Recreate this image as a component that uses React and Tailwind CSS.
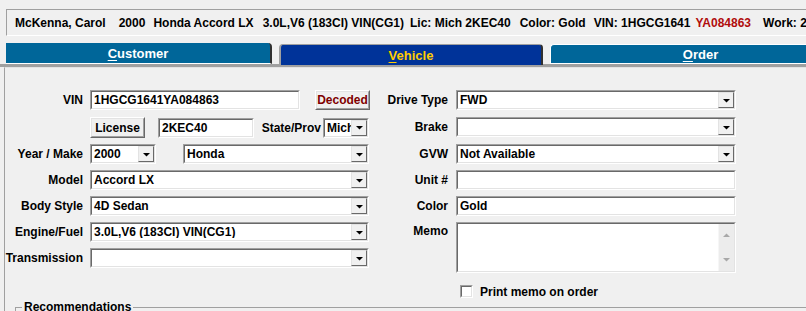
import React from 'react';

function Box({ className = '', inner = '', children }) {
  return (
    <div className={`shrink-0 border border-t-[#a0a0a0] border-l-[#a0a0a0] border-b-white border-r-white ${className}`}>
      <div className={`h-full flex border border-t-[#696969] border-l-[#696969] border-b-[#e3e3e3] border-r-[#e3e3e3] bg-white ${inner}`}>
        {children}
      </div>
    </div>
  );
}

function Arrow() {
  return (
    <div className="w-[16px] self-stretch bg-[#f0f0f0] border border-t-[#e3e3e3] border-l-[#e3e3e3] border-b-[#696969] border-r-[#696969] flex items-center justify-center">
      <svg width="7" height="4" viewBox="0 0 7 4" className="mt-[1px]">
        <path d="M0 0h7L3.5 3.6z" fill="#000" />
      </svg>
    </div>
  );
}

function Input({ value, className }) {
  return (
    <Box className={className} inner="items-center">
      <span className="pl-[2px] whitespace-nowrap">{value}</span>
    </Box>
  );
}

function Drop({ value, className }) {
  return (
    <Box className={className} inner="items-center">
      <span className="flex-1 min-w-0 overflow-hidden whitespace-nowrap pl-[2px]">{value}</span>
      <Arrow />
    </Box>
  );
}

function Btn({ children, className = '' }) {
  return (
    <div className={`shrink-0 border border-t-white border-l-white border-b-[#696969] border-r-[#696969] bg-[#f0f0f0] ${className}`}>
      <div className="h-full flex items-center justify-center border border-t-[#e3e3e3] border-l-[#e3e3e3] border-b-[#a0a0a0] border-r-[#a0a0a0]">
        {children}
      </div>
    </div>
  );
}

function LeftRow({ label, children, className = '' }) {
  return (
    <div className={`flex items-center h-[20px] ${className}`}>
      <div className="w-[78px] shrink-0 text-right whitespace-nowrap">{label}</div>
      <div className="ml-[7px] w-[279px] h-full flex items-center">{children}</div>
    </div>
  );
}

function RightRow({ label, children, className = '' }) {
  return (
    <div className={`flex items-center h-[20px] ${className}`}>
      <div className="w-[79px] shrink-0 text-right whitespace-nowrap">{label}</div>
      <div className="ml-[8px] w-[280px] h-full flex items-center">{children}</div>
    </div>
  );
}

export default function App() {
  return (
    <div className="w-[806px] h-[311px] overflow-hidden bg-[#f0f0f0] text-black text-[12px] font-bold leading-none font-['Liberation_Sans',Arial,sans-serif]">
      {/* summary bar */}
      <div className="pt-[9px] pl-[6px]">
        <div className="w-[900px] h-[27px] border border-t-[#a0a0a0] border-l-[#a0a0a0] border-b-white border-r-white flex items-center pl-[8px] whitespace-nowrap">
          <span>McKenna, Carol</span>
          <span className="ml-[13px]">2000</span>
          <span className="ml-[8px]">Honda Accord LX</span>
          <span className="ml-[9px]">3.0L,V6 (183CI) VIN(CG1)</span>
          <span className="ml-[6px]">Lic: Mich 2KEC40</span>
          <span className="ml-[9px]">Color: Gold</span>
          <span className="ml-[8px]">VIN: 1HGCG1641</span>
          <span className="ml-[5px] text-[#b00c0c]">YA084863</span>
          <span className="ml-[12px]">Work: 2</span>
        </div>
      </div>

      {/* tabs */}
      <div className="flex items-start w-[900px] h-[21px] mt-[7px] text-[13px]">
        <div className="shrink-0 ml-[6px] w-[266px] h-[21px] bg-[#006699] border-b border-b-white border-r-2 border-r-[#303030] rounded-tr-[4px] flex items-center justify-center text-white">
          <span><span className="underline underline-offset-2">C</span>ustomer</span>
        </div>
        <div className="shrink-0 ml-[7px] w-[264px] h-[21px] mt-[1px] bg-[#003399] border-l-2 border-t border-l-[#a0a0a0] border-t-[#a0a0a0] border-r-2 border-r-[#303030] rounded-tl-[4px] rounded-tr-[4px] flex items-center justify-center text-[#ffcc00]">
          <span><span className="underline underline-offset-2">V</span>ehicle</span>
        </div>
        <div className="shrink-0 ml-[7px] w-[300px] h-[20px] mt-[1px] bg-[#006699] border-l border-t border-b border-white rounded-tl-[4px] flex items-center justify-center text-white">
          <span><span className="underline underline-offset-2">O</span>rder</span>
        </div>
      </div>
      <div className="h-[3px] bg-[#a0a0a0] w-full" />

      {/* vehicle panel */}
      <div className="ml-[4px] w-[900px] border-l border-t border-l-[#a0a0a0] border-t-[#e3e3e3]">
        <div className="flex items-start pt-[22px]">
          <div className="w-[364px] shrink-0 flex flex-col">
            <LeftRow label="VIN">
              <Input value="1HGCG1641YA084863" className="w-[210px] h-[20px]" />
              <Btn className="ml-[15px] w-[55px] h-[20px]">
                <span className="text-[#800000]">Decoded</span>
              </Btn>
            </LeftRow>
            <LeftRow label="" className="mt-[7px] h-[21px]">
              <Btn className="w-[55px] h-[21px]">License</Btn>
              <Input value="2KEC40" className="ml-[13px] w-[96px] h-[20px]" />
              <div className="flex-1 text-right pr-[2px] whitespace-nowrap">State/Prov</div>
              <Drop value="Mich" className="w-[46px] h-[20px]" />
            </LeftRow>
            <LeftRow label="Year / Make" className="mt-[6px]">
              <Drop value="2000" className="w-[66px] h-[20px]" />
              <Drop value="Honda" className="ml-[27px] flex-1 h-[20px]" />
            </LeftRow>
            <LeftRow label="Model" className="mt-[6px]">
              <Drop value="Accord LX" className="w-full h-[20px]" />
            </LeftRow>
            <LeftRow label="Body Style" className="mt-[6px]">
              <Drop value="4D Sedan" className="w-full h-[20px]" />
            </LeftRow>
            <LeftRow label="Engine/Fuel" className="mt-[6px]">
              <Drop value="3.0L,V6 (183CI) VIN(CG1)" className="w-full h-[20px]" />
            </LeftRow>
            <LeftRow label="Transmission" className="mt-[6px]">
              <Drop value="" className="w-full h-[20px]" />
            </LeftRow>
          </div>

          <div className="w-[370px] shrink-0 flex flex-col">
            <RightRow label="Drive Type">
              <Drop value="FWD" className="w-full h-[20px]" />
            </RightRow>
            <RightRow label="Brake" className="mt-[7px]">
              <Drop value="" className="w-full h-[20px]" />
            </RightRow>
            <RightRow label="GVW" className="mt-[7px]">
              <Drop value="Not Available" className="w-full h-[20px]" />
            </RightRow>
            <RightRow label="Unit #" className="mt-[6px]">
              <Input value="" className="w-full h-[20px]" />
            </RightRow>
            <RightRow label="Color" className="mt-[6px]">
              <Input value="Gold" className="w-full h-[20px]" />
            </RightRow>
            <div className="flex items-start mt-[6px]">
              <div className="w-[79px] shrink-0 text-right pt-[3px]">Memo</div>
              <Box className="ml-[8px] w-[280px] h-[51px]">
                <div className="flex-1" />
                <div className="w-[16px] bg-[#ececec] border-l border-[#f6f6f6] flex flex-col items-center justify-between py-[9px]">
                  <svg width="7" height="4" viewBox="0 0 7 4">
                    <path d="M0 4h7L3.5 0.4z" fill="#a8a8a8" />
                  </svg>
                  <svg width="7" height="4" viewBox="0 0 7 4">
                    <path d="M0 0h7L3.5 3.6z" fill="#a8a8a8" />
                  </svg>
                </div>
              </Box>
            </div>
            <div className="flex items-center mt-[12px] ml-[91px]">
              <Box className="w-[13px] h-[13px]" />
              <span className="ml-[7px] whitespace-nowrap">Print memo on order</span>
            </div>
          </div>
        </div>

        <fieldset className="ml-[10px] mt-[2px] w-[880px] h-[40px] border border-[#a0a0a0]">
          <legend className="ml-[6px] px-[2px] leading-[14px]">Recommendations</legend>
        </fieldset>
      </div>
    </div>
  );
}
